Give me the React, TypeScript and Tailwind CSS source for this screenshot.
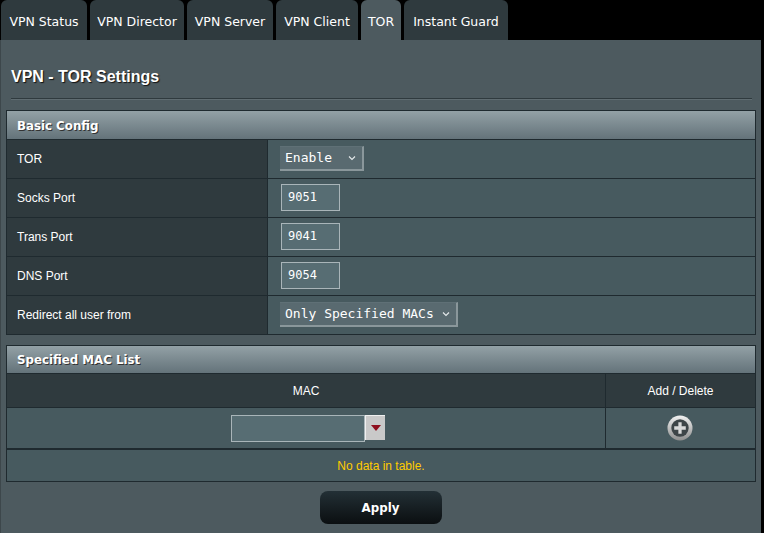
const tabs = [
  { label: "VPN Status", w: "w-[86px]" },
  { label: "VPN Director", w: "w-[94px]" },
  { label: "VPN Server", w: "w-[86px]" },
  { label: "VPN Client", w: "w-[82px]" },
  { label: "TOR", w: "w-[40px]", active: true },
  { label: "Instant Guard", w: "w-[104px]" },
];

const sans = "font-['Liberation_Sans',Arial,sans-serif]";
const dejavu = "font-['DejaVu_Sans',Verdana,sans-serif]";
const mono = "font-['DejaVu_Sans_Mono',monospace]";

function SectionHeader({ children, size }: { children: string; size: string }) {
  return (
    <div className={`${size} flex items-center pl-[10px] pt-[3px] bg-gradient-to-b from-[#93a1a6] to-[#64737a] border-b border-[#1f2a2f] text-white text-[11.8px] font-bold font-['DejaVu_Sans',Verdana,sans-serif] [text-shadow:1px_1px_0_#333]`}>
      {children}
    </div>
  );
}

function Chevron() {
  return (
    <svg width="8" height="6" viewBox="0 0 8 6" className="text-[#e5eaec]">
      <path d="M1 1.5 L4 4.5 L7 1.5" fill="none" stroke="currentColor" strokeWidth="1.1" />
    </svg>
  );
}

function Row({ label, children, last }: { label: string; children: React.ReactNode; last?: boolean }) {
  return (
    <div className={`flex ${last ? "h-[38px]" : "h-[39px] border-b border-[#1f2a2f]"}`}>
      <div className={`w-[261px] flex items-center pl-[10px] bg-[#2f3a3e] border-r border-[#1f2a2f] text-[12px] text-white ${sans}`}>
        {label}
      </div>
      <div className="flex-1 flex items-center pl-[12px] bg-[#475a5f]">{children}</div>
    </div>
  );
}

function PortInput({ value }: { value: string }) {
  return (
    <div className={`w-[59px] h-[27px] ml-px mb-[2px] flex items-center pl-[6px] pb-px bg-[#576d73] border border-[#a9b5b9] text-[12px] text-white ${mono}`}>
      {value}
    </div>
  );
}

function SelectBox({ text, w }: { text: string; w: string }) {
  return (
    <div className={`${w} h-[25px] mb-[2px] flex items-center justify-between pl-[5px] pr-[6px] bg-[#596a70] border-r-2 border-b-2 border-[#8a979b] border-t border-t-[#5f7076] text-[13px] text-white ${mono}`}>
      <span>{text}</span>
      <Chevron />
    </div>
  );
}

export default function App() {
  return (
    <div className="w-[764px] h-[533px] bg-black overflow-hidden">
      <div className="flex h-[40px] pl-px gap-[3px]">
        {tabs.map((t) => (
          <div
            key={t.label}
            className={`${t.w} h-[40px] flex items-center justify-center pt-[5px] rounded-t-[6px] text-[12.5px] text-white ${dejavu} ${
              t.active ? "bg-[#4d5a5f]" : "bg-[#2f3a3e]"
            }`}
          >
            {t.label}
          </div>
        ))}
      </div>

      <div className="w-[761px] h-[493px] bg-[#4d5a5f] border-l border-[#3d474b] pl-[5px] pr-[5px]">
        <div className={`pl-[5px] pt-[19px] h-[36px] box-content flex items-center text-[16px] font-bold text-white ${sans} [text-shadow:1px_1px_1px_#111]`}>
          VPN - TOR Settings
        </div>
        <div className="mt-[3px] ml-[5px] mr-[4px] h-[2px] border-t border-[#2f3a3e] bg-[#5f6c71]" />

        <div className="mt-[10px] border border-[#1f2a2f] w-[750px]">
          <SectionHeader size="h-[29px]">Basic Config</SectionHeader>
          <Row label="TOR">
            <SelectBox text="Enable" w="w-[84px]" />
          </Row>
          <Row label="Socks Port">
            <PortInput value="9051" />
          </Row>
          <Row label="Trans Port">
            <PortInput value="9041" />
          </Row>
          <Row label="DNS Port">
            <PortInput value="9054" />
          </Row>
          <Row label="Redirect all user from" last>
            <SelectBox text="Only Specified MACs" w="w-[178px]" />
          </Row>
        </div>

        <div className="mt-[10px] border border-[#1f2a2f] w-[750px]">
          <SectionHeader size="h-[28px]">Specified MAC List</SectionHeader>
          <div className={`flex h-[34px] bg-[#2f3a3e] border-b border-[#1f2a2f] text-[12px] text-white ${sans}`}>
            <div className="w-[599px] flex items-center justify-center border-r border-[#1f2a2f]">MAC</div>
            <div className="flex-1 flex items-center justify-center">Add / Delete</div>
          </div>
          <div className="flex h-[42px] bg-[#475a5f] border-b-2 border-[#1f2a2f]">
            <div className="w-[599px] flex items-start justify-center border-r border-[#1f2a2f] pt-[7px] pl-[4px]">
              <div className="flex">
                <div className="w-[134px] h-[27px] bg-[#576d73] border border-[#a9b5b9]" />
                <div className="w-[20px] h-[25px] bg-[#c9c9c9] border-t border-l border-[#f0f0f0] flex items-center justify-center">
                  <svg width="10" height="6" viewBox="0 0 10 6">
                    <path d="M0 0 H10 L5 6 Z" fill="#8f0f1e" />
                  </svg>
                </div>
              </div>
            </div>
            <div className="flex-1 flex items-center justify-center pr-px">
              <svg width="26" height="26" viewBox="0 0 27 27">
                <defs>
                  <linearGradient id="ring" x1="0" y1="0" x2="0" y2="1">
                    <stop offset="0" stopColor="#f2f2f2" />
                    <stop offset="1" stopColor="#8e8e8e" />
                  </linearGradient>
                </defs>
                <circle cx="13.5" cy="13.5" r="13" fill="url(#ring)" />
                <circle cx="13.5" cy="13.5" r="9" fill="#3e4548" />
                <path d="M13.5 7.5 V19.5 M7.5 13.5 H19.5" stroke="#d9d9d9" strokeWidth="3.4" />
              </svg>
            </div>
          </div>
          <div className={`h-[31px] flex items-center justify-center bg-[#475a5f] text-[12px] text-[#ffcc00] ${sans}`}>
            No data in table.
          </div>
        </div>

        <div className="flex justify-center mt-[9px] w-[750px]">
          <div className={`w-[122px] h-[33px] ml-[-1px] pt-[2px] rounded-[8px] flex items-center justify-center bg-gradient-to-b from-[#233036] to-[#0b0f11] text-[11.8px] font-bold text-white ${dejavu}`}>
            Apply
          </div>
        </div>
      </div>
    </div>
  );
}
